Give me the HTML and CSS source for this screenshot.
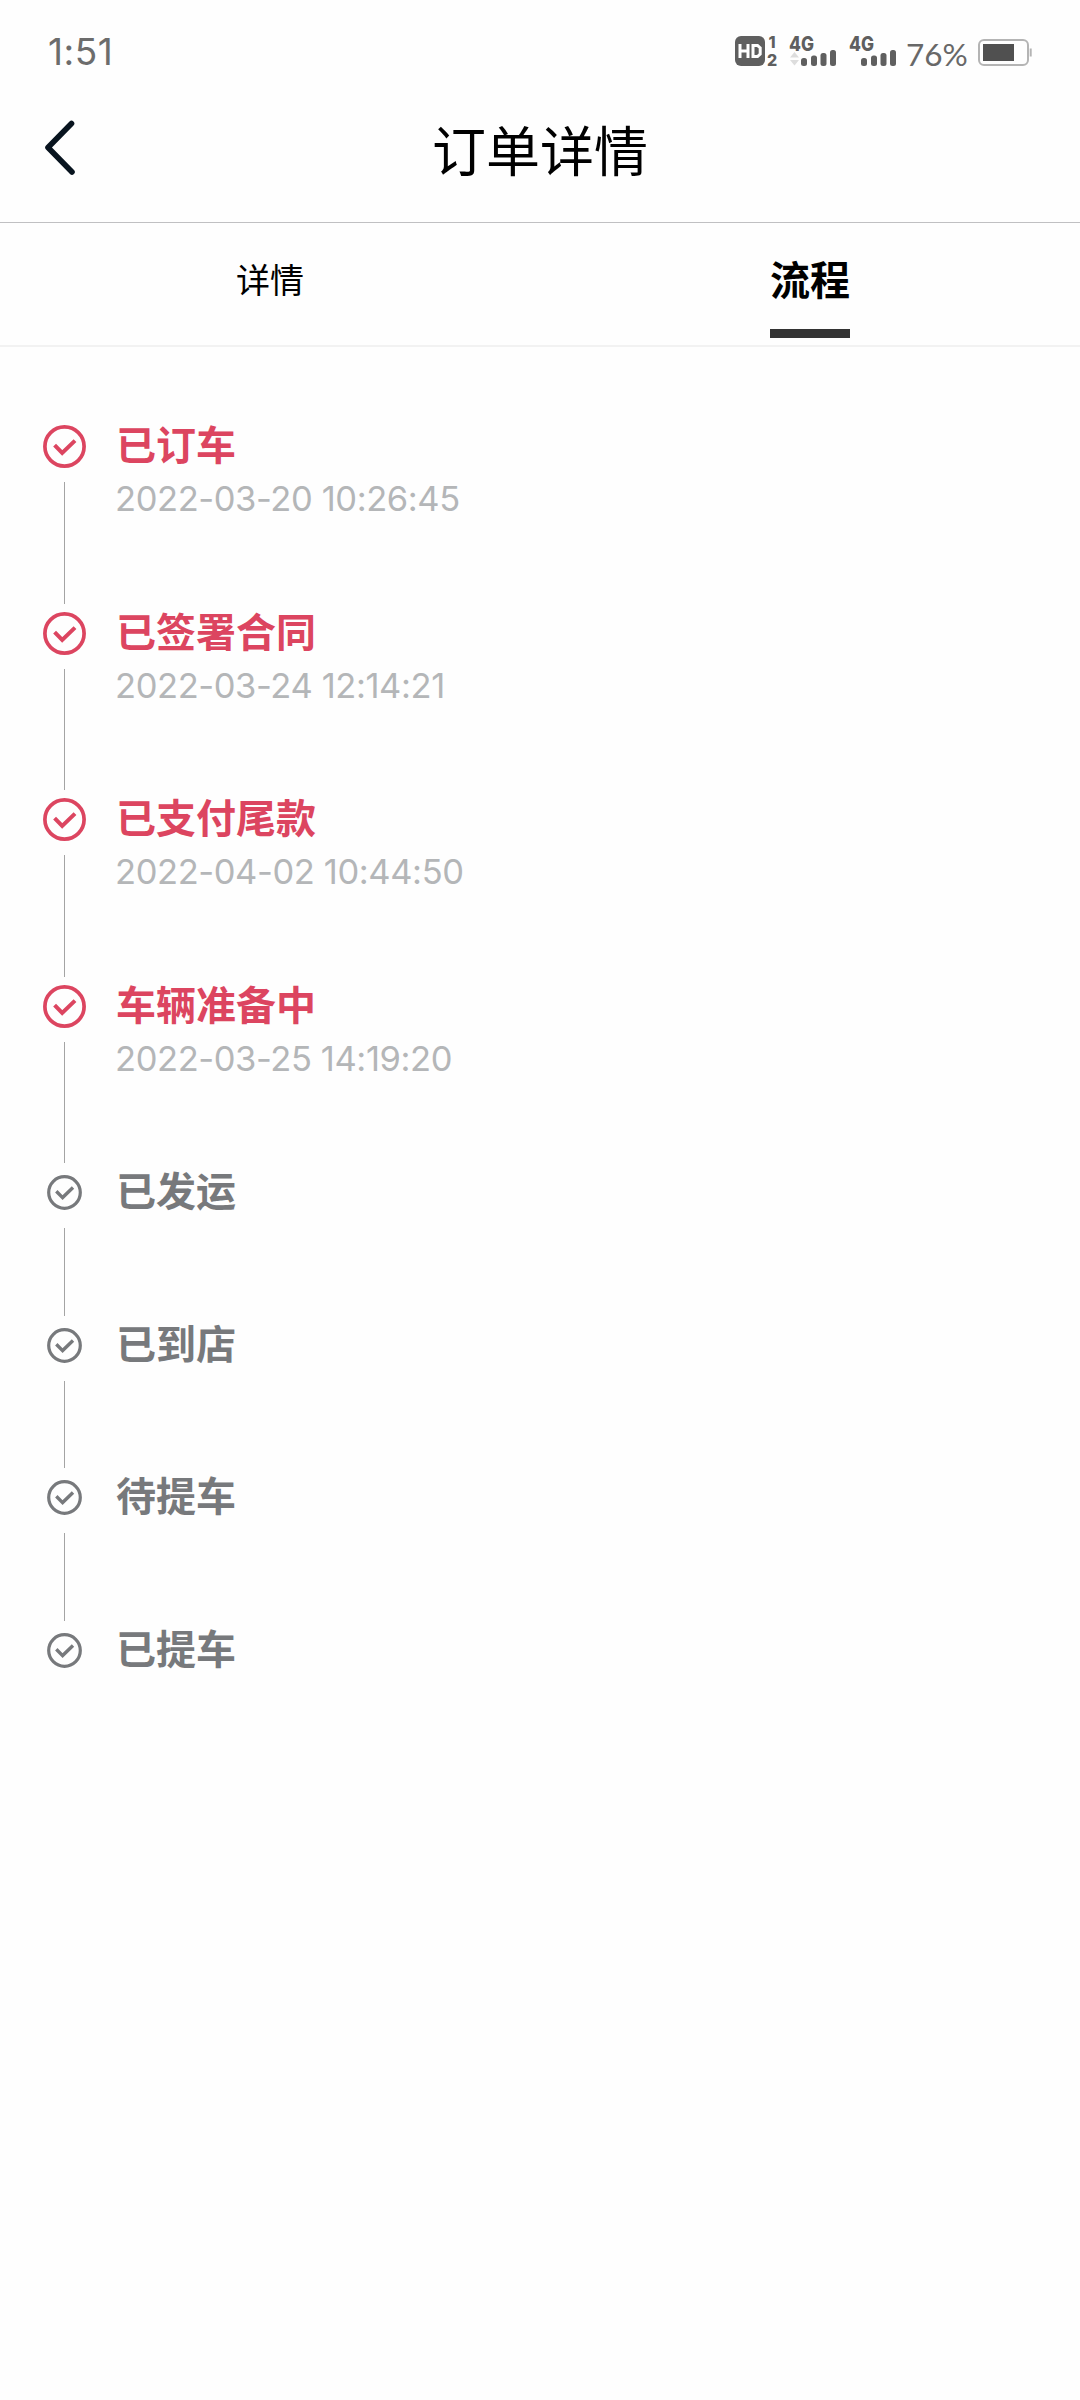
FILE: index.html
```html
<!DOCTYPE html>
<html lang="zh-CN">
<head>
<meta charset="utf-8">
<title>订单详情</title>
<link rel="stylesheet" href="styles.css">
</head>
<body>
<svg width="0" height="0" class="defs">
  <symbol id="check" viewBox="0 0 43 43">
    <circle cx="21.5" cy="21.5" r="19.6" fill="none" stroke="currentColor" stroke-width="3.7"/>
    <path d="M11.6 20.2L19.2 28L32 15.6" fill="none" stroke="currentColor" stroke-width="4"/>
  </symbol>
  <symbol id="check-small" viewBox="0 0 35 35">
    <circle cx="17.5" cy="17.5" r="15.8" fill="none" stroke="currentColor" stroke-width="3.2"/>
    <path d="M9.3 16.3L15.6 22.6L26 12.6" fill="none" stroke="currentColor" stroke-width="3.4"/>
  </symbol>
</svg>
<div class="status">
  <span class="clock">1:51</span>
  <div class="status-icons">
    <svg width="44" height="34" viewBox="0 0 44 34">
      <rect x="0" y="2" width="30" height="30" rx="6" fill="#5f5f5f"/>
      <path d="M5 10V24M13 10V24M5 17H13M18 11.5H22.5L25.2 14V20L22.5 22.5H18Z" fill="none" stroke="#fff" stroke-width="3"/>
      <text x="33.5" y="14" class="sim">1</text>
      <text x="32" y="31.5" class="sim">2</text>
    </svg>
    <svg width="48" height="34" viewBox="0 0 48 34">
      <text x="0" y="16.5" class="net" textLength="25" lengthAdjust="spacingAndGlyphs">4G</text>
      <path d="M1 23.5L5.5 18L10 23.5ZM1 26L5.5 31.5L10 26Z" fill="#ddd"/>
      <g fill="#5f5f5f"><rect x="12" y="24" width="6" height="8" rx="2.5"/><rect x="22" y="21.5" width="6" height="10.5" rx="2.5"/><rect x="31.5" y="19" width="6" height="13" rx="2.5"/><rect x="41" y="16" width="6" height="16" rx="2.5"/></g>
    </svg>
    <svg width="48" height="34" viewBox="0 0 48 34">
      <text x="0" y="16.5" class="net" textLength="25" lengthAdjust="spacingAndGlyphs">4G</text>
      <g fill="#5f5f5f"><rect x="12" y="24" width="6" height="8" rx="2.5"/><rect x="22" y="21.5" width="6" height="10.5" rx="2.5"/><rect x="31.5" y="19" width="6" height="13" rx="2.5"/><rect x="41" y="16" width="6" height="16" rx="2.5"/></g>
    </svg>
    <span class="percent">76%</span>
    <svg class="battery" width="54" height="34" viewBox="0 0 54 34">
      <rect x="1" y="6" width="49" height="25" rx="5" fill="none" stroke="#b4b4b4" stroke-width="2"/>
      <rect x="5" y="10" width="31" height="17" fill="#505050"/>
      <path d="M52.7 14.5V22.5" stroke="#b4b4b4" stroke-width="2"/>
    </svg>
  </div>
</div>
<header class="header">
  <svg class="back" width="31" height="55" viewBox="0 0 31 55"><path d="M27.5 3.5L4 27.500L28 52" fill="none" stroke="#08141f" stroke-width="5.6" stroke-linecap="round" stroke-linejoin="round"/></svg>
  <h1 class="title">订单详情</h1>
</header>
<nav class="tabs">
  <div class="tab">详情</div>
  <div class="tab active"><span class="tab-label">流程</span></div>
</nav>
<ol class="steps">
  <li class="step done"><div class="rail"><div class="slot"><svg width="43" height="43"><use href="#check"/></svg></div><i class="line"></i></div><div class="info"><h2 class="name">已订车</h2><time class="time">2022-03-20 10:26:45</time></div></li>
  <li class="step done"><div class="rail"><div class="slot"><svg width="43" height="43"><use href="#check"/></svg></div><i class="line"></i></div><div class="info"><h2 class="name">已签署合同</h2><time class="time">2022-03-24 12:14:21</time></div></li>
  <li class="step done"><div class="rail"><div class="slot"><svg width="43" height="43"><use href="#check"/></svg></div><i class="line"></i></div><div class="info"><h2 class="name">已支付尾款</h2><time class="time">2022-04-02 10:44:50</time></div></li>
  <li class="step done"><div class="rail"><div class="slot"><svg width="43" height="43"><use href="#check"/></svg></div><i class="line"></i></div><div class="info"><h2 class="name">车辆准备中</h2><time class="time">2022-03-25 14:19:20</time></div></li>
  <li class="step"><div class="rail"><div class="slot"><svg width="35" height="35"><use href="#check-small"/></svg></div><i class="line"></i></div><div class="info"><h2 class="name">已发运</h2></div></li>
  <li class="step"><div class="rail"><div class="slot"><svg width="35" height="35"><use href="#check-small"/></svg></div><i class="line"></i></div><div class="info"><h2 class="name">已到店</h2></div></li>
  <li class="step"><div class="rail"><div class="slot"><svg width="35" height="35"><use href="#check-small"/></svg></div><i class="line"></i></div><div class="info"><h2 class="name">待提车</h2></div></li>
  <li class="step"><div class="rail"><div class="slot"><svg width="35" height="35"><use href="#check-small"/></svg></div></div><div class="info"><h2 class="name">已提车</h2></div></li>
</ol>
</body>
</html>
```
FILE: styles.css
```css
* { box-sizing: border-box; margin: 0; padding: 0; }
body { min-height: 2400px; background: #fefefe; color: #000; font-family: "Noto Sans CJK SC", sans-serif; }
svg { display: block; flex: none; overflow: visible; }
.defs { position: absolute; }
.status { display: flex; justify-content: space-between; height: 100px; padding: 34px 48px 0 48px; }
.clock { height: 36px; font: 400 37px/35px Inter, sans-serif; color: #6c6c6c; letter-spacing: 0.5px; }
.status-icons { display: flex; height: 34px; }
.status-icons svg + svg { margin-left: 10px; }
.status-icons svg:nth-of-type(3) { margin-left: 12px; }
.sim { font: 800 16px Inter, sans-serif; fill: #5f5f5f; }
.net { font: 800 20.5px Inter, sans-serif; fill: #5f5f5f; }
.percent { width: 81px; padding-left: 9px; font: 400 31.5px/41px Lato, sans-serif; color: #686868; white-space: nowrap; }
.header { display: flex; align-items: center; height: 123px; padding: 0 44px 27px; border-bottom: 1px solid #c0c0c2; }
.title { flex: 1; margin-right: 31px; padding-top: 3px; text-align: center; font-size: 54px; font-weight: 400; line-height: 80px; }
.tabs { display: flex; height: 124px; border-bottom: 2px solid #f2f2f2; }
.tab { flex: 1; display: flex; justify-content: center; font-size: 34px; line-height: 112px; }
.tab.active { font-size: 40px; font-weight: 700; line-height: 110px; }
.tab-label { height: 115px; border-bottom: 9px solid #333; }
.steps { padding: 70px 43px 0; list-style: none; }
.step { display: flex; gap: 30px; height: 152.5px; color: #77797c; }
.step.done { height: 186.5px; color: #dc4560; }
.rail { display: flex; flex-direction: column; align-items: center; width: 43px; }
.slot { display: flex; align-items: center; height: 59px; margin-bottom: 6px; flex: none; }
.line { flex: 1; width: 1px; background: #a4a4a4; }
.name { font-size: 40px; font-weight: 700; line-height: 52px; }
.time { display: block; margin-left: -1px; padding-top: 4px; font: 400 34.5px/52px Inter, sans-serif; letter-spacing: -0.4px; color: #b4b6b8; white-space: nowrap; }
```
